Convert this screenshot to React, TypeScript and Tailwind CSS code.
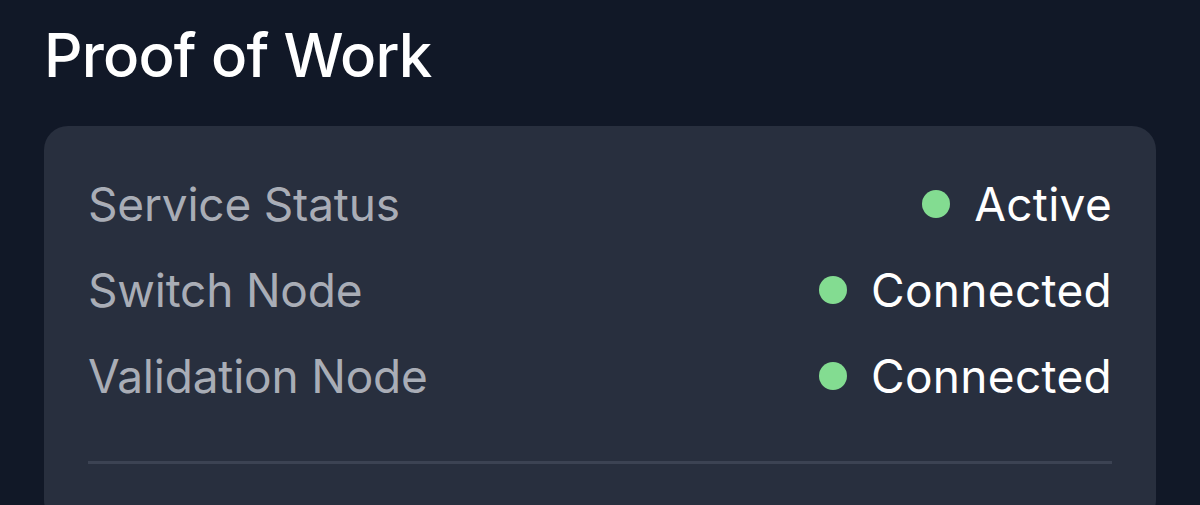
import { Fragment } from 'react';

const ROWS = [
  { label: 'Service Status', value: 'Active' },
  { label: 'Switch Node', value: 'Connected' },
  { label: 'Validation Node', value: 'Connected' },
];

export default function App() {
  return (
    <div className="h-[505px] overflow-hidden bg-[#111827] px-[44px] pt-[15px]" style={{ fontFamily: 'Inter, "Noto Sans", sans-serif' }}>
      <h1 className="text-[60px] leading-[80px] font-medium text-white tracking-[-0.8px]">Proof of Work</h1>
      <div className="mt-[31px] rounded-[24px] bg-[#282f3e] px-[44px] pt-[35px] pb-[60px]">
        {ROWS.map(r => (
          <Fragment key={r.label}>
            <div className="flex h-[86px] items-center justify-between">
              <span className="text-[46px] text-[#a9adb6] tracking-[-0.2px]">{r.label}</span>
              <div className="flex items-center gap-[24px]">
                <span className="h-[28px] w-[28px] rounded-full bg-[#83dc91]" />
                <span className="text-[46px] text-white tracking-[0.3px]">{r.value}</span>
              </div>
            </div>
          </Fragment>
        ))}
        <div className="mt-[42px] h-[3px] bg-[#3c4353]" />
      </div>
    </div>
  );
}
